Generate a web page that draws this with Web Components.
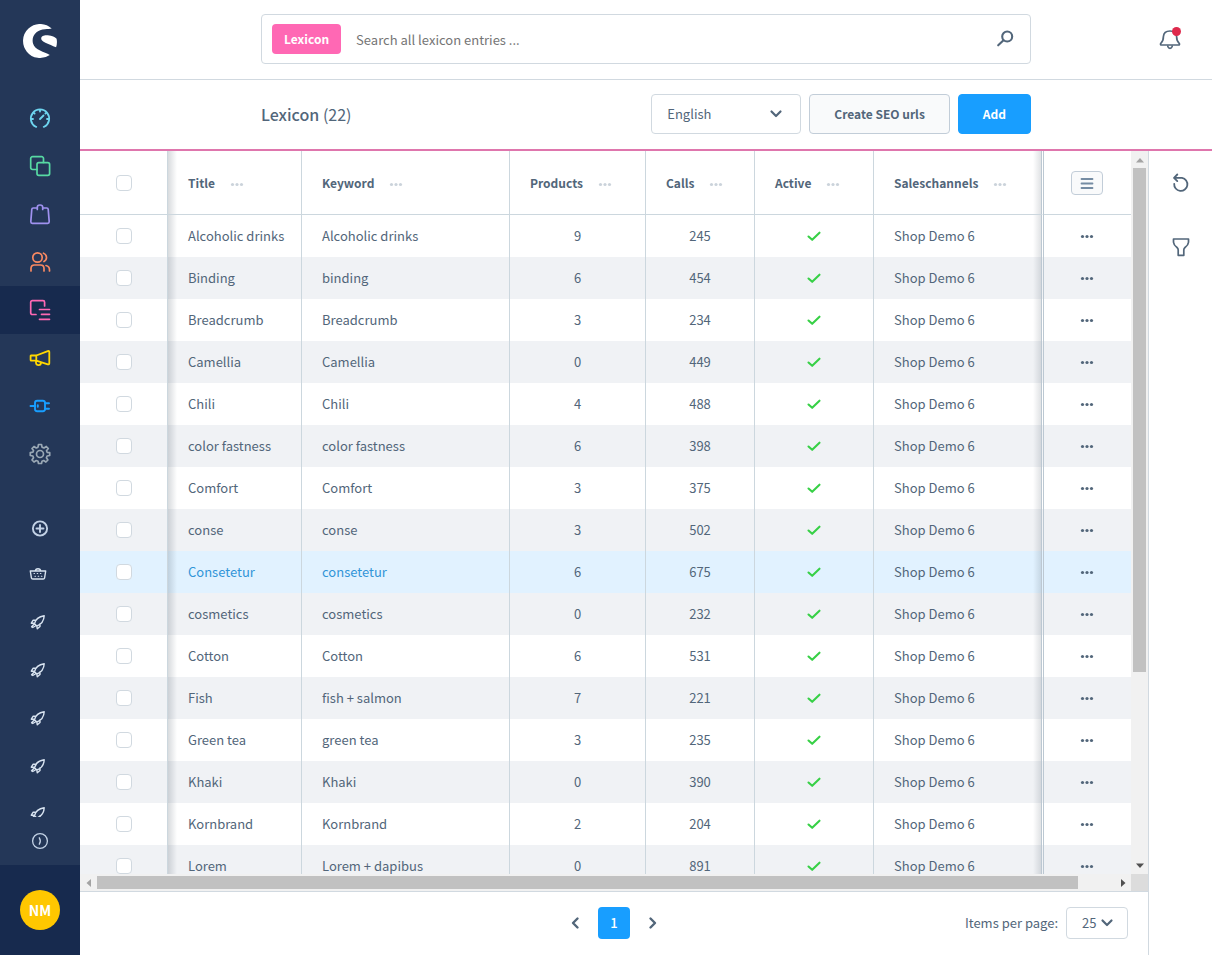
<!DOCTYPE html>
<html lang="en">
<head>
<meta charset="utf-8">
<title>Lexicon</title>
<style>
  html { height: 100%; }
  body {
    margin: 0;
    height: 100%;
    background: #fff;
    color: #52667a;
    font: 13px/20px "Noto Sans CJK SC", "Noto Sans", sans-serif;
    --line: #d1d9e0;
    --blue: #189eff;
    --navy: #243758;
    --navy-dark: #172a4e;
  }
</style>
</head>
<body>
<lex-app></lex-app>

<script>
const ICONS = {
  logo: [34, '<path fill="currentColor" d="M28.7 4.6A17 17 0 1 0 26.8 30.9C21.500 27.600 11.800 26.400 10 19.500C8 11.500 14 5.600 22 5.200C24.500 5 27.200 5.100 28.700 4.600Z"/><path fill="currentColor" d="M18.200 14.600C18.200 11.600 21.600 11 24.800 11.300C29.400 11.700 31.800 12.800 33.600 14.800Q34.500 19 33.100 23.300C29 22 26.600 20.400 22.400 18.800C19.800 17.700 18.200 16.400 18.200 14.600Z"/>'],
  gauge: [22, '<path d="M7.300 19.800H6.800A9.200 9.200 0 1 1 15.200 19.800H14.700M11 12L14.500 8.500M11 2.500v2M2 12h2M18 12h2M5 5.900l.6.6M17 5.900l-.6.6"/>', 1.8],
  copy: [22, '<path d="M8 14.500H3.500A1.800 1.800 0 0 1 1.700 12.700V3.500A1.800 1.800 0 0 1 3.500 1.700H12.700A1.800 1.800 0 0 1 14.500 3.500V7.500"/><rect x="8" y="7.700" width="12.600" height="12.600" rx="1.800"/>', 1.7],
  bag: [22, '<path d="M7.500 5H4.200Q2.900 5 2.800 6.200L1.800 18.600Q1.800 20.300 3.300 20.300H18.700Q20.200 20.300 20.200 18.600L19.200 6.200Q19.100 5 17.800 5H14.500M8.300 6.500V4.200Q8.300 2 11 2T13.700 4.200V6.500"/>', 1.7],
  users: [22, '<circle cx="8.500" cy="6.500" r="4.700"/><path d="M2 20V17.500Q2 14 5.500 14H11.500Q15 14 15 17.500V20M14.500 2.200A4.600 4.600 0 0 1 15 10.600M17 14.500Q20.500 15.200 20.500 19V20"/>', 1.7],
  content: [22, '<path d="M7 15.500H3.300A1.600 1.600 0 0 1 1.700 13.900V3.300A1.600 1.600 0 0 1 3.300 1.700H14A1.600 1.600 0 0 1 15.600 3.300V7M10.500 10.500H20.500M12.500 15.300H20.500M10.500 20.300H20.500"/>', 1.7],
  horn: [22, '<path d="M2 8.500Q1.600 8.500 1.600 9V13Q1.600 13.600 2.200 13.600H7.300L18.800 17.300Q20.300 17.700 20.300 16.300V5Q20.300 3.500 18.800 4.100L7.300 8.500ZM7.300 8.500V13.600M7 13.600V15.800Q7.200 18.200 9.600 18.200Q12 18.200 12 15.500"/>', 1.8],
  plug: [22, '<rect x="6" y="5.800" width="10" height="10.500" rx="2.200"/><path d="M1.500 11H6M16 8.300H20M16 13.700H20M8.800 10.300v1.400"/>', 1.9],
  gear: [22, '<path d="M9.500 1.500H12.500L13 4.100L15 5L17.300 3.500L19.300 5.500L17.500 7.800L18.100 9.300L20.700 9.700V12.500L18.100 13L17.400 14.700L18.900 17L16.900 19L14.700 17.500L13 18.200L12.500 20.500H9.500L9 18.200L7.300 17.500L5 19L3 17L4.500 14.700L3.900 13L1.300 12.500V9.600L3.900 9.200L4.500 7.600L3 5.500L5 3.500L7.300 5L9 4.200Z"/><circle cx="11" cy="11" r="3.500"/>', 1.7],
  plus: [20, '<circle cx="10" cy="10.500" r="7.100"/><path d="M10 7V14M6.500 10.500H13.500"/>', 1.9],
  basket: [20, '<path d="M2.300 7H17.700L16.600 13.800Q16.400 15 15.200 15H4.800Q3.600 15 3.400 13.800ZM7.300 7Q7.500 4.700 10 4.700T12.700 7"/><path stroke-width="1.100" stroke-dasharray=".5 2.700" d="M6 9.500H15M7 12.300H14"/>', 1.4],
  rocket: [20, '<path d="M6.500 11.700Q8 5 16.200 3.800Q15.800 11.500 8.800 14ZM7.700 8.200H5.200L3.300 11.200L6.500 11.300M12 11.800V14.500L9.300 16.800L8.800 14.200M5.800 12.500L3.600 14.800L4.800 15.500L7.300 14"/>', 1.4],
  circleNext: [20, '<circle cx="10" cy="10" r="7.400"/><path d="M9.300 6.800Q11.400 10 9.300 13.200"/>', 1.3],
  search: [20, '<circle cx="12.200" cy="7.500" r="5"/><path d="M8.500 11.300L3.200 16.300"/>', 2.1],
  bell: [24, '<path d="M3 18H21Q22 17.200 21 16.200Q18.600 14 18.600 9.600Q18.200 4 12 4T5.400 9.600Q5.400 14 3 16.200Q2 17.200 3 18ZM9.800 19.500Q10.500 21.300 12 21.300T14.200 19.500"/>', 1.7],
  undo: [20, '<path d="M3.200 4.800H11A6.600 6.600 0 1 1 3.200 10.800M6.300 1.500L3 4.800L6.300 8.100"/>', 1.8],
  funnel: [20, '<path d="M2.500 2H17.500V5.200Q17.300 8 14 10.500Q12.800 11.500 12.800 13V18.300H7.200V13Q7.200 11.500 6 10.500Q2.700 8 2.500 5.200Z"/>', 1.7],
  down: [16, '<path d="M3.500 5.500L8 10L12.500 5.500"/>', 2.2],
  left: [16, '<path d="M10.500 3.500L6 8L10.500 12.500"/>', 2.4],
  right: [16, '<path d="M5.500 3.500L10 8L5.500 12.500"/>', 2.4],
  dots: [16, '<g fill="currentColor" stroke="none"><circle cx="3.500" cy="8.500" r="1.600"/><circle cx="8" cy="8.500" r="1.600"/><circle cx="12.500" cy="8.500" r="1.600"/></g>'],
  check: [16, '<path d="M2.500 7.500L6.200 10.800L13.500 3.700"/>', 2.1],
  list: [16, '<path d="M2.500 4H13.500M2.500 8.500H13.500M2.500 13H13.500"/>', 1.8],
  triUp: [16, '<path fill="currentColor" stroke="none" d="M4 10.500L8 6L12 10.500Z"/>'],
  triDown: [16, '<path fill="currentColor" stroke="none" d="M4 5.500L8 10L12 5.500Z"/>'],
  triLeft: [16, '<path fill="currentColor" stroke="none" d="M10 4L5.500 8L10 12Z"/>'],
  triRight: [16, '<path fill="currentColor" stroke="none" d="M6 4L10.500 8L6 12Z"/>']
};

function define(name, html, setup) {
  const template = document.createElement('template');
  template.innerHTML = html;
  customElements.define(name, class extends HTMLElement {
    constructor() {
      super();
      this.attachShadow({ mode: 'open' }).append(template.content.cloneNode(true));
    }
    connectedCallback() { if (setup) setup(this, this.shadowRoot); }
  });
}

define('lex-icon', `<style>
  :host { display: inline-flex; flex: none; }
  svg { display: block; }
</style><svg fill="none" stroke="currentColor" stroke-linecap="round" stroke-linejoin="round" aria-hidden="true"></svg>`,
(host, root) => {
  const [box, shape, stroke] = ICONS[host.getAttribute('name')];
  const svg = root.querySelector('svg');
  svg.setAttribute('viewBox', `0 0 ${box} ${box}`);
  svg.setAttribute('width', box);
  svg.setAttribute('height', box);
  svg.setAttribute('stroke-width', stroke || 0);
  svg.innerHTML = shape;
});

define('lex-nav', `<style>
  :host { display: flex; flex-direction: column; background: var(--navy); min-height: 0; color: #d8e3f0; }
  a { display: flex; align-items: center; justify-content: center; height: 48px; flex: none; color: inherit; }
  .logo { height: 34px; padding: 24px 0 36px; color: #fff; }
  nav { display: flex; flex-direction: column; flex: none; }
  .active { background: var(--navy-dark); }
  .extras { flex: 1; min-height: 0; overflow: hidden; padding-top: 27px; display: flex; flex-direction: column; }
  .extras a { width: 76px; }
  .extras .add { width: 80px; height: 45px; color: #c3d2e6; }
  button { height: 48px; flex: none; border: 0; padding: 0; background: none; color: #c3d2e6; display: flex; align-items: center; justify-content: center; }
  .user { flex: none; height: 90px; background: var(--navy-dark); display: flex; align-items: center; justify-content: center; }
  .avatar { width: 40px; height: 40px; border-radius: 50%; background: #ffc700; color: #fff; font-weight: 700; font-size: 14px; line-height: 40px; text-align: center; }
</style>
<a class="logo" href="#home" aria-label="Home"><lex-icon name="logo"></lex-icon></a>
<nav></nav>
<div class="extras"></div>
<button aria-label="Toggle menu"><lex-icon name="circleNext"></lex-icon></button>
<div class="user"><div class="avatar">NM</div></div>`,
(host, root) => {
  root.querySelector('nav').innerHTML = [
    ['gauge', '#6ed5f0', 'Dashboard'], ['copy', '#57d9a3', 'Catalogues'], ['bag', '#a092f0', 'Orders'],
    ['users', '#f88962', 'Customers'], ['content', '#ff68b4', 'Content'], ['horn', '#ffd700', 'Marketing'],
    ['plug', '#189eff', 'Extensions'], ['gear', '#9aa8b5', 'Settings']
  ].map(([icon, color, label]) =>
    `<a href="#${icon}" aria-label="${label}" class="${icon === 'content' ? 'active' : ''}" style="color:${color}"><lex-icon name="${icon}"></lex-icon></a>`).join('');
  root.querySelector('.extras').innerHTML =
    '<a class="add" href="#add" aria-label="Add"><lex-icon name="plus"></lex-icon></a>' +
    '<a href="#shop" aria-label="Storefront"><lex-icon name="basket"></lex-icon></a>' +
    '<a href="#channel" aria-label="Sales channel"><lex-icon name="rocket"></lex-icon></a>'.repeat(5);
});

define('lex-search', `<style>
  :host { display: grid; grid-template-columns: minmax(96px, 1fr) minmax(0, 770px) minmax(96px, 1fr); align-items: center; height: 78px; padding-bottom: 1px; border-bottom: 1px solid var(--line); }
  form { grid-column: 2; box-sizing: border-box; height: 50px; border: 1px solid var(--line); border-radius: 4px; display: flex; align-items: center; padding: 0 15px 0 10px; }
  label { flex: none; background: #ff68b4; color: #fff; border-radius: 4px; font-size: 12px; font-weight: 700; line-height: 30px; padding: 0 12px; }
  input { flex: 1; min-width: 0; border: 0; outline: 0; padding: 0 15px; font: inherit; height: 30px; color: inherit; background: none; }
  input::placeholder { color: #757575; opacity: 1; }
  button { border: 0; background: none; padding: 0; color: inherit; position: relative; display: flex; }
  .bell { justify-self: end; margin-right: 30px; }
  .dot { position: absolute; top: 0; right: 1px; width: 9px; height: 9px; border-radius: 50%; background: #de294c; }
</style>
<form><label for="q">Lexicon</label><input id="q" type="text" placeholder="Search all lexicon entries ..."><button type="button" aria-label="Search"><lex-icon name="search"></lex-icon></button></form>
<button class="bell" aria-label="Notifications"><lex-icon name="bell"></lex-icon><span class="dot"></span></button>`);

define('lex-select', `<style>
  :host { display: inline-grid; align-items: center; color: inherit; }
  select, lex-icon { grid-area: 1 / 1; }
  select { appearance: none; box-sizing: border-box; width: 100%; height: 100%; border: 1px solid var(--line); border-radius: 4px; background: #fff; color: inherit; font: inherit; padding: 0 15px; }
  lex-icon { justify-self: end; pointer-events: none; margin-right: var(--icon-gap, 17px); }
</style><select><option></option></select><lex-icon name="down"></lex-icon>`,
(host, root) => {
  root.querySelector('option').textContent = host.getAttribute('value');
  root.querySelector('select').setAttribute('aria-label', host.getAttribute('label'));
});

define('lex-smartbar', `<style>
  :host { display: grid; grid-template-columns: minmax(96px, 1fr) minmax(0, 770px) minmax(96px, 1fr); align-items: center; height: 68px; padding-bottom: 1px; border-bottom: 2px solid #df76ad; }
  .bar { grid-column: 2; display: flex; align-items: center; gap: 8px; }
  h1 { flex: 1; margin: 0; font-size: 16px; line-height: 24px; font-weight: 400; }
  h1 b { font-weight: 500; }
  lex-select { width: 150px; height: 40px; }
  button { box-sizing: border-box; height: 40px; border: 1px solid #c2cdd8; border-radius: 4px; background: #f9fafb; color: inherit; font: inherit; font-size: 12px; font-weight: 700; padding: 0 24px; }
  .primary { background: var(--blue); border-color: var(--blue); color: #fff; font-weight: 700; }
</style>
<div class="bar"><h1><b>Lexicon</b> (22)</h1><lex-select value="English" label="Language"></lex-select><button>Create SEO urls</button><button class="primary">Add</button></div>`);

define('lex-table', `<style>
  :host { display: block; overflow: hidden; min-height: 0; min-width: 0; }
  table { width: 100%; table-layout: fixed; border-collapse: separate; border-spacing: 0; }
  th, td { box-sizing: border-box; height: 42px; padding: 0 20px; text-align: left; border-right: 1px solid #ccd7de; white-space: nowrap; overflow: hidden; }
  th { height: 64px; border-bottom: 1px solid #ccd7de; font-size: 12px; font-weight: 700; }
  th lex-icon { color: #cbd3db; vertical-align: middle; margin-left: 14px; }
  tbody tr:nth-child(even) { background: #f0f2f5; }
  tbody tr.hover { background: #e1f2ff; }
  .hover a { color: #3195d8; }
  a { color: inherit; text-decoration: none; }
  .c { text-align: center; }
  .box, .act { text-align: center; padding: 0; }
  td lex-icon { vertical-align: middle; }
  .ok { color: #37d046; }
  .act { border-right: 0; padding-right: 1px; }
  .first { background-image: linear-gradient(90deg, rgba(60,75,90,.2), rgba(60,75,90,0)); background-size: 9px 100%; background-repeat: no-repeat; }
  .last { border-right: 3px double #bcc8d2; background-image: linear-gradient(270deg, rgba(60,75,90,.16), rgba(60,75,90,0)); background-size: 8px 100%; background-position: right; background-repeat: no-repeat; }
  input { appearance: none; box-sizing: border-box; width: 16px; height: 16px; border: 1px solid #d1d9e0; border-radius: 4px; background: #fff; display: block; margin: 0 auto; }
  button { border: 0; background: none; padding: 0; color: inherit; display: block; margin: 0 auto; width: 32px; height: 24px; }
  .cols { border: 1px solid #c2cdd8; border-radius: 4px; background: #f9fafb; box-sizing: border-box; }
  .cols lex-icon { margin: 0; color: #758ca3; }
  button lex-icon { display: flex; justify-content: center; }
</style>
<table>
  <colgroup><col style="width:88px"><col style="width:134px"><col style="width:208px"><col style="width:136px"><col style="width:109px"><col style="width:119px"><col><col style="width:87px"></colgroup>
  <thead><tr><th class="box"><input type="checkbox" aria-label="Select all"></th></tr></thead>
  <tbody></tbody>
</table>`,
(host, root) => {
  root.querySelector('thead tr').insertAdjacentHTML('beforeend',
    ['Title', 'Keyword', 'Products', 'Calls', 'Active', 'Saleschannels'].map((t, i) =>
      `<th class="${i === 0 ? 'first' : i === 5 ? 'last' : ''}">${t}<lex-icon name="dots"></lex-icon></th>`).join('') +
    '<th class="act"><button class="cols" aria-label="Columns"><lex-icon name="list"></lex-icon></button></th>');
  root.querySelector('tbody').innerHTML = [
    ['Alcoholic drinks', 'Alcoholic drinks', 9, 245], ['Binding', 'binding', 6, 454],
    ['Breadcrumb', 'Breadcrumb', 3, 234], ['Camellia', 'Camellia', 0, 449],
    ['Chili', 'Chili', 4, 488], ['color fastness', 'color fastness', 6, 398],
    ['Comfort', 'Comfort', 3, 375], ['conse', 'conse', 3, 502],
    ['Consetetur', 'consetetur', 6, 675], ['cosmetics', 'cosmetics', 0, 232],
    ['Cotton', 'Cotton', 6, 531], ['Fish', 'fish + salmon', 7, 221],
    ['Green tea', 'green tea', 3, 235], ['Khaki', 'Khaki', 0, 390],
    ['Kornbrand', 'Kornbrand', 2, 204], ['Lorem', 'Lorem + dapibus', 0, 891]
  ].map(([title, key, products, calls]) =>
    `<tr class="${title === 'Consetetur' ? 'hover' : ''}"><td class="box"><input type="checkbox" aria-label="Select ${title}"></td>` +
    `<td class="first"><a href="#entry">${title}</a></td><td><a href="#entry">${key}</a></td><td class="c">${products}</td><td class="c">${calls}</td>` +
    `<td class="c ok"><lex-icon name="check"></lex-icon></td><td class="last">Shop Demo 6</td>` +
    `<td class="act"><button aria-label="Actions"><lex-icon name="dots"></lex-icon></button></td></tr>`).join('');
});

define('lex-scrollbar', `<style>
  :host { display: flex; background: #f1f1f1; box-sizing: border-box; }
  :host([vertical]) { flex-direction: column; }
  span { flex: none; width: 17px; height: 17px; display: flex; align-items: center; justify-content: center; color: #505050; }
  #start { color: #a3a3a3; }
  #thumb { background: #c1c1c1; margin: 2px 0; }
  :host([vertical]) #thumb { margin: 0 2px; }
</style><span id="start"></span><div id="thumb"></div><div id="rest"></div><span id="end"></span>`,
(host, root) => {
  const vertical = host.hasAttribute('vertical');
  const [thumb, rest] = host.getAttribute('ratio').split(':');
  root.getElementById('start').innerHTML = `<lex-icon name="${vertical ? 'triUp' : 'triLeft'}"></lex-icon>`;
  root.getElementById('end').innerHTML = `<lex-icon name="${vertical ? 'triDown' : 'triRight'}"></lex-icon>`;
  root.getElementById('thumb').style.flex = thumb;
  root.getElementById('rest').style.flex = rest;
});

define('lex-pager', `<style>
  :host { display: grid; grid-template-columns: 1fr auto 1fr; align-items: center; height: 62px; padding-bottom: 1px; border-top: 1px solid var(--line); }
  .pages { grid-column: 2; display: flex; align-items: center; gap: 7px; }
  button { width: 32px; height: 32px; padding: 0; border: 0; border-radius: 4px; background: none; color: inherit; font: inherit; display: flex; align-items: center; justify-content: center; }
  .current { background: var(--blue); color: #fff; font-weight: 500; }
  .size { justify-self: end; display: flex; align-items: center; gap: 8px; margin-right: 20px; }
  lex-select { width: 62px; height: 32px; --icon-gap: 13px; }
</style>
<div class="pages"><button aria-label="Previous"><lex-icon name="left"></lex-icon></button><button class="current">1</button><button aria-label="Next"><lex-icon name="right"></lex-icon></button></div>
<div class="size"><span>Items per page:</span><lex-select value="25" label="Items per page"></lex-select></div>`);

define('lex-tools', `<style>
  :host { display: flex; flex-direction: column; border-left: 1px solid var(--line); }
  button { height: 64px; border: 0; padding: 0; background: none; color: inherit; display: flex; align-items: center; justify-content: center; }
</style><button aria-label="Refresh"><lex-icon name="undo"></lex-icon></button><button aria-label="Filter"><lex-icon name="funnel"></lex-icon></button>`);

define('lex-app', `<style>
  :host { display: grid; grid-template-columns: 80px minmax(0, 1fr); grid-template-rows: minmax(0, 1fr); height: 100vh; }
  main { display: flex; flex-direction: column; min-width: 0; min-height: 0; }
  .content { flex: 1; min-height: 0; display: grid; grid-template-columns: minmax(0, 1fr) 64px; }
  .page { display: flex; flex-direction: column; min-width: 0; min-height: 0; }
  .scroll { flex: 1; min-height: 0; display: grid; grid-template: minmax(0, 1fr) 17px / minmax(0, 1fr) 17px; }
  .corner { background: #dcdcdc; }
</style>
<lex-nav></lex-nav>
<main>
  <lex-search></lex-search>
  <lex-smartbar></lex-smartbar>
  <div class="content">
    <div class="page">
      <div class="scroll">
        <lex-table></lex-table>
        <lex-scrollbar vertical ratio="504:185"></lex-scrollbar>
        <lex-scrollbar ratio="981:36"></lex-scrollbar>
        <div class="corner"></div>
      </div>
      <lex-pager></lex-pager>
    </div>
    <lex-tools></lex-tools>
  </div>
</main>`);
</script>
</body>
</html>
